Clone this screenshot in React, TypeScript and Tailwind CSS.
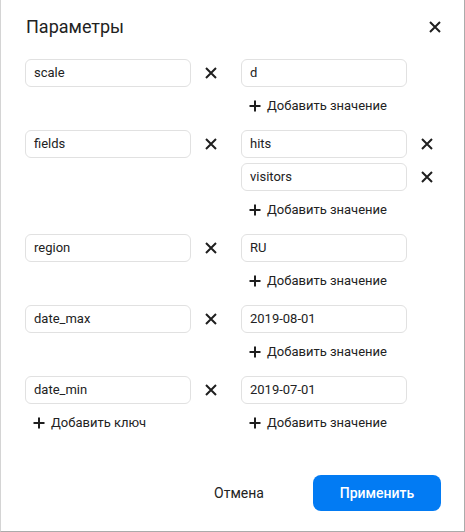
import React from "react";

const font = { fontFamily: "Roboto, 'Noto Sans', sans-serif" };

function XIcon({ size = 12 }: { size?: number }) {
  return (
    <svg width={size} height={size} viewBox="0 0 12 12" fill="none">
      <path d="M1 1L11 11M11 1L1 11" stroke="#1f1f1f" strokeWidth="2" strokeLinecap="butt" />
    </svg>
  );
}

function PlusIcon() {
  return (
    <svg width="12" height="12" viewBox="0 0 12 12" fill="none">
      <path d="M6 0.5V11.5M0.5 6H11.5" stroke="#1f1f1f" strokeWidth="2" />
    </svg>
  );
}

function Field({ value }: { value: string }) {
  return (
    <div className="h-[28px] w-[166px] rounded-[6px] border border-[#e1e1e1] pl-2 flex items-center text-[13px] text-[#222]">
      {value}
    </div>
  );
}

function Del() {
  return (
    <div className="w-10 h-[28px] flex items-center justify-center">
      <XIcon />
    </div>
  );
}

function AddBtn({ label }: { label: string }) {
  return (
    <div className="h-[43px] pt-[7px] pl-2">
      <div className="h-6 flex items-center gap-[6px] text-[13px] text-[#222]">
        <PlusIcon />
        <span>{label}</span>
      </div>
    </div>
  );
}

type Row = { key: string; values: string[]; last?: boolean };

const rows: Row[] = [
  { key: "scale", values: ["d"] },
  { key: "fields", values: ["hits", "visitors"] },
  { key: "region", values: ["RU"] },
  { key: "date_max", values: ["2019-08-01"] },
  { key: "date_min", values: ["2019-07-01"], last: true },
];

export default function App() {
  return (
    <div
      className="w-[465px] h-[532px] bg-white border-l border-l-[#d4d4d4] border-r border-r-[#ababab] border-b border-b-[#ababab] relative"
      style={font}
    >
      <div className="flex justify-between pl-[25px] pr-[23px] pt-[13px] h-[59px] items-start">
        <div className="text-[18px] leading-[28px] text-[#222]">Параметры</div>
        <div className="h-[28px] flex items-center">
          <XIcon />
        </div>
      </div>
      <div className="pl-[24px]">
        {rows.map((r) => (
          <div key={r.key} className="flex items-start">
            <div className="flex flex-col">
              <Field value={r.key} />
              {r.last && <AddBtn label="Добавить ключ" />}
            </div>
            <Del />
            <div className="ml-[10px] flex flex-col">
              <div className="flex flex-col gap-[5px]">
                {r.values.map((v) => (
                  <div key={v} className="flex items-start">
                    <Field value={v} />
                    {r.values.length > 1 && <Del />}
                  </div>
                ))}
              </div>
              <AddBtn label="Добавить значение" />
            </div>
          </div>
        ))}
      </div>
      <div className="flex justify-end gap-[10px] pr-[23px] mt-[28px]">
        <button className="w-[128px] h-9 rounded-[8px] text-[14px] text-[#222]">Отмена</button>
        <button className="w-[128px] h-9 rounded-[8px] bg-[#027bf3] text-white text-[14px] font-medium">
          Применить
        </button>
      </div>
    </div>
  );
}
